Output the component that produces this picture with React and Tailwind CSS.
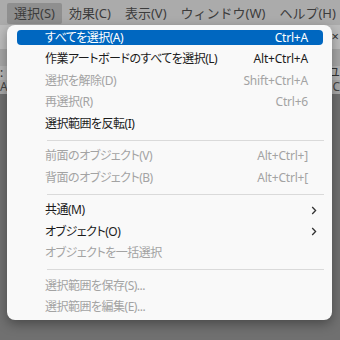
import React from 'react';

const items = [
  { label: 'すべてを選択(A)', shortcut: 'Ctrl+A', active: true },
  { label: '作業アートボードのすべてを選択(L)', shortcut: 'Alt+Ctrl+A' },
  { label: '選択を解除(D)', shortcut: 'Shift+Ctrl+A', disabled: true },
  { label: '再選択(R)', shortcut: 'Ctrl+6', disabled: true },
  { label: '選択範囲を反転(I)' },
  { sep: true },
  { label: '前面のオブジェクト(V)', shortcut: 'Alt+Ctrl+]', disabled: true },
  { label: '背面のオブジェクト(B)', shortcut: 'Alt+Ctrl+[', disabled: true },
  { sep: true },
  { label: '共通(M)', sub: true },
  { label: 'オブジェクト(O)', sub: true },
  { label: 'オブジェクトを一括選択', disabled: true },
  { sep: true },
  { label: '選択範囲を保存(S)...', disabled: true },
  { label: '選択範囲を編集(E)...', disabled: true },
];

const menubar = ['選択(S)', '効果(C)', '表示(V)', 'ウィンドウ(W)', 'ヘルプ(H)'];

function Chevron() {
  return (
    <svg width="6" height="9" viewBox="0 0 6 9" className="text-[#333]">
      <path d="M1.2 1 L4.6 4.5 L1.2 8" fill="none" stroke="currentColor" strokeWidth="1.3" />
    </svg>
  );
}

function MenuRow({ item }) {
  if (item.sep) {
    return <div className="h-[11px] flex items-center pl-[40px] pr-[8px]"><div className="h-px w-full bg-[#dadada]" /></div>;
  }
  const textColor = item.active ? 'text-white' : item.disabled ? 'text-[#a3a3a3]' : 'text-[#1b1b1b]';
  return (
    <div className="h-[21.5px] flex items-center pl-[10px] pr-[9px]">
      <div
        className={
          'h-[15px] w-full flex items-center justify-between rounded-[4px] pl-[28px] pr-[15px] whitespace-nowrap ' +
          (item.active ? 'bg-[#0067c0] ' : '') + textColor
        }
      >
        <span className="tracking-[-0.5px]">{item.label}</span>
        {item.shortcut && <span className="tracking-[-0.2px]">{item.shortcut}</span>}
        {item.sub && <span className="-mr-[9px] flex items-center"><Chevron /></span>}
      </div>
    </div>
  );
}

export default function App() {
  return (
    <div className="relative w-[340px] h-[340px] overflow-hidden bg-[#707070] font-['Noto_Sans','Noto_Sans_CJK_JP',sans-serif]">
      <div className="h-[25px] bg-[#ababab] flex items-stretch pl-[7px] pt-[3px] pb-px text-[13px] text-[#3c3c3c] whitespace-nowrap">
        {menubar.map((m, i) => (
          <div key={m} className={'shrink-0 px-[7px] flex items-center ' + (i === 0 ? 'bg-[#8f8f8f] rounded-[2px]' : '')}>
            {m}
          </div>
        ))}
      </div>
      <div className="h-[24px] bg-[#bcbcbc] flex justify-end items-center pr-[1px] text-[13px] text-[#333]">×</div>
      <div className="h-[17px] bg-[#a6a6a6]" />
      <div className="h-[14px] bg-[#b4b4b4] flex justify-between items-center text-[12px] text-[#333]">
        <span>:</span><span>ユ</span>
      </div>
      <div className="h-[14px] bg-[#a9a9a9] flex justify-between items-center text-[12px] text-[#444]">
        <span>A</span><span>C</span>
      </div>

      <div className="absolute left-[7px] top-[25px] w-[325px] h-[295px] bg-[#f9f9f9] rounded-[8px] shadow-[0_4px_12px_rgba(0,0,0,0.35)] pt-[2px] text-[12px] [font-feature-settings:'palt']">
        {items.map((item, i) => (
          <MenuRow key={i} item={item} />
        ))}
      </div>
    </div>
  );
}
